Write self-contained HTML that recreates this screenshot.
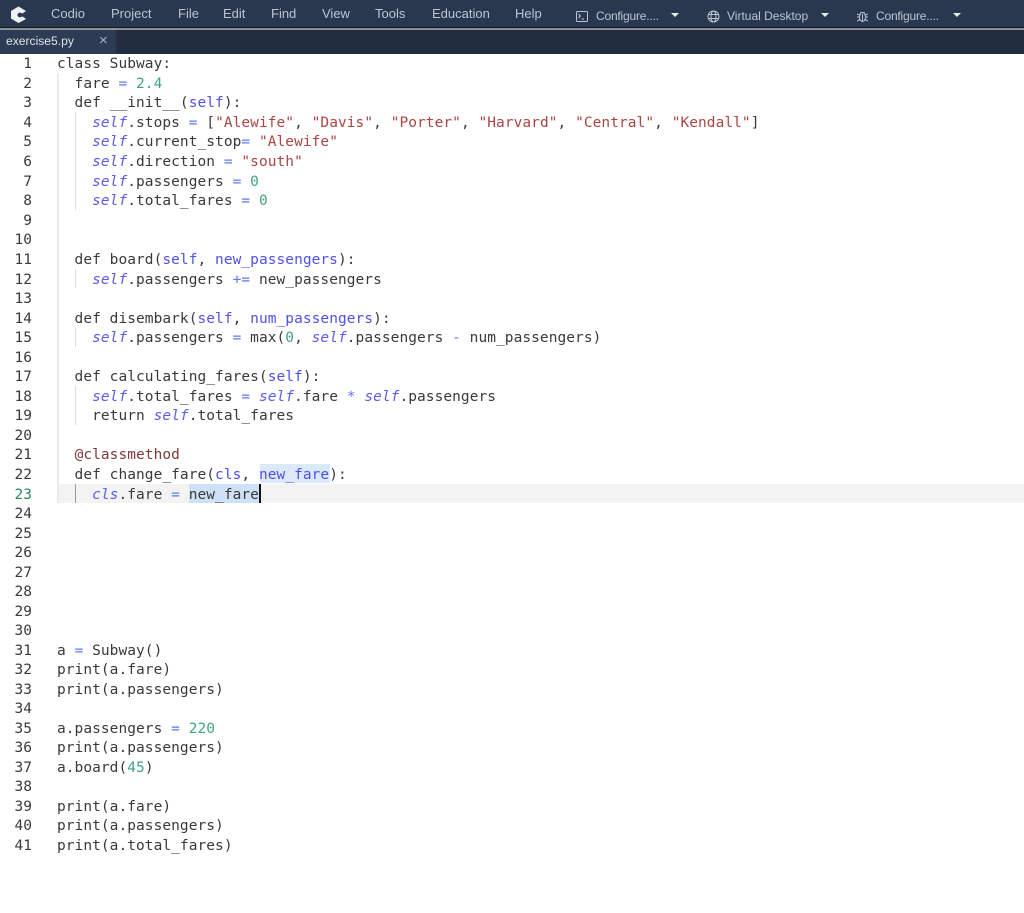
<!DOCTYPE html>
<html><head><meta charset="utf-8">
<style>
html,body{margin:0;padding:0;background:#fff;width:1024px;height:913px;overflow:hidden}
body{position:relative;font-family:"Liberation Sans",sans-serif}
#top{position:absolute;left:0;top:0;width:1024px;height:28px;background:#29384f}
#sep{position:absolute;left:0;top:27px;width:1024px;height:1px;background:#10161f}
#sep2{position:absolute;left:0;top:28px;width:1024px;height:2px;background:#8d929a}
#tabs{position:absolute;left:0;top:30px;width:1024px;height:24px;background:#222d3f}
#tab{position:absolute;left:0;top:30px;width:116px;height:24px;background:#2d3c54}
.m{position:absolute;top:5px;font-size:13px;line-height:17px;color:#bcc5d2;white-space:nowrap}
.c{position:absolute;top:8px;font-size:12px;line-height:17px;color:#bcc5d2;white-space:nowrap}
.cf{letter-spacing:-.2px}
.tri{position:absolute;top:13px;width:0;height:0;border-left:4.500px solid transparent;border-right:4.500px solid transparent;border-top:4px solid #e8ecf0}
svg{position:absolute}
.ln,.l{position:absolute;font-family:"DejaVu Sans Mono","Liberation Mono",monospace;font-size:14.5px;line-height:20px;height:20px;white-space:pre;margin-top:1px}
.ln{left:0;width:32px;text-align:right;color:#3a3a3a}
.l{left:57px;color:#3a3a3a;letter-spacing:.05px}
.s{color:#5c5cf0;font-style:italic}
.p{color:#5050ea}
.o{color:#5f78f0}
.n{color:#3fa387}
.t{color:#ab4444}
.d{color:#7c3a3a}
.g{position:absolute;width:1px;background:#dcdcdc}
</style></head><body>
<div id="top"></div><div id="sep"></div><div id="sep2"></div><div id="tabs"></div><div id="tab"></div>
<svg style="left:10px;top:6px" width="17" height="17" viewBox="0 0 17 17"><path d="M8.500 .5L16 5L12.500 7.500L9.500 6.500L7.500 8V10L9.500 11.500L12.500 10.500L16 13L8.500 17L1 12.500V5Z" fill="#eef1f5"/></svg>
<div class="m" style="left:51px">Codio</div>
<div class="m" style="left:111px">Project</div>
<div class="m" style="left:178px">File</div>
<div class="m" style="left:223px">Edit</div>
<div class="m" style="left:271px">Find</div>
<div class="m" style="left:322px">View</div>
<div class="m" style="left:375px">Tools</div>
<div class="m" style="left:432px">Education</div>
<div class="m" style="left:515px">Help</div>
<svg style="left:576px;top:11px" width="12" height="11" viewBox="0 0 12 11"><rect x=".5" y=".5" width="11" height="10" rx="1" fill="none" stroke="#bcc5d2"/><path d="M2.500 3L4.500 5L2.500 7M5.500 8H8" fill="none" stroke="#bcc5d2"/></svg>
<div class="c cf" style="left:596px">Configure....</div><div class="tri" style="left:671px"></div>
<svg style="left:707px;top:10px" width="13" height="13" viewBox="0 0 13 13" fill="none" stroke="#bcc5d2"><circle cx="6.500" cy="6.500" r="5.500"/><ellipse cx="6.500" cy="6.500" rx="2.500" ry="5.500"/><path d="M1 4.500H12M1 8.500H12"/></svg>
<div class="c" style="left:727px">Virtual Desktop</div><div class="tri" style="left:821px"></div>
<svg style="left:857px;top:10px" width="11" height="13" viewBox="0 0 11 13" fill="none" stroke="#bcc5d2"><ellipse cx="5.500" cy="7" rx="3" ry="4.500"/><path d="M0 4L2.500 5M11 4L8.500 5M0 7H2.500M11 7H8.500M0 11L3 9.500M11 11L8 9.500M3.500 2L4.500 3M7.500 2L6.500 3M5.500 4V11"/></svg>
<div class="c cf" style="left:876px">Configure....</div><div class="tri" style="left:953px"></div>
<div class="m" style="left:6px;top:33px;font-size:12.100px;color:#dfe4ea">exercise5.py</div>
<div class="m" style="left:99px;top:32px;font-size:15px;color:#aab3c0">×</div>

<div style="position:absolute;left:57px;top:484px;width:967px;height:19px;background:#f3f3f3"></div>
<div style="position:absolute;left:260px;top:464px;width:70px;height:19px;background:#dbe9fa"></div>
<div style="position:absolute;left:189px;top:484px;width:71px;height:19px;background:#cfe1f6"></div>
<div style="position:absolute;left:259px;top:484px;width:2px;height:19px;background:#111"></div>
<div class="g" style="left:57px;top:73px;height:430px;width:2px;background:#ececec"></div>
<div class="g" style="left:75px;top:112px;height:98px"></div>
<div class="g" style="left:75px;top:269px;height:19px"></div>
<div class="g" style="left:75px;top:327px;height:20px"></div>
<div class="g" style="left:75px;top:386px;height:39px"></div>
<div class="g" style="left:75px;top:484px;height:19px;background:#999"></div>

<div class="ln" style="top:53px">1</div><div class="l" style="top:53px">class Subway:</div>
<div class="ln" style="top:73px">2</div><div class="l" style="top:73px">  fare <span class="o">=</span> <span class="n">2.4</span></div>
<div class="ln" style="top:92px">3</div><div class="l" style="top:92px">  def __init__(<span class="p">self</span>):</div>
<div class="ln" style="top:112px">4</div><div class="l" style="top:112px">    <span class="s">self</span>.stops <span class="o">=</span> [<span class="t">"Alewife"</span>, <span class="t">"Davis"</span>, <span class="t">"Porter"</span>, <span class="t">"Harvard"</span>, <span class="t">"Central"</span>, <span class="t">"Kendall"</span>]</div>
<div class="ln" style="top:131px">5</div><div class="l" style="top:131px">    <span class="s">self</span>.current_stop<span class="o">=</span> <span class="t">"Alewife"</span></div>
<div class="ln" style="top:151px">6</div><div class="l" style="top:151px">    <span class="s">self</span>.direction <span class="o">=</span> <span class="t">"south"</span></div>
<div class="ln" style="top:171px">7</div><div class="l" style="top:171px">    <span class="s">self</span>.passengers <span class="o">=</span> <span class="n">0</span></div>
<div class="ln" style="top:190px">8</div><div class="l" style="top:190px">    <span class="s">self</span>.total_fares <span class="o">=</span> <span class="n">0</span></div>
<div class="ln" style="top:210px">9</div>
<div class="ln" style="top:229px">10</div>
<div class="ln" style="top:249px">11</div><div class="l" style="top:249px">  def board(<span class="p">self</span>, <span class="p">new_passengers</span>):</div>
<div class="ln" style="top:269px">12</div><div class="l" style="top:269px">    <span class="s">self</span>.passengers <span class="o">+=</span> new_passengers</div>
<div class="ln" style="top:288px">13</div>
<div class="ln" style="top:308px">14</div><div class="l" style="top:308px">  def disembark(<span class="p">self</span>, <span class="p">num_passengers</span>):</div>
<div class="ln" style="top:327px">15</div><div class="l" style="top:327px">    <span class="s">self</span>.passengers <span class="o">=</span> max(<span class="n">0</span>, <span class="s">self</span>.passengers <span class="o">-</span> num_passengers)</div>
<div class="ln" style="top:347px">16</div>
<div class="ln" style="top:366px">17</div><div class="l" style="top:366px">  def calculating_fares(<span class="p">self</span>):</div>
<div class="ln" style="top:386px">18</div><div class="l" style="top:386px">    <span class="s">self</span>.total_fares <span class="o">=</span> <span class="s">self</span>.fare <span class="o">*</span> <span class="s">self</span>.passengers</div>
<div class="ln" style="top:405px">19</div><div class="l" style="top:405px">    return <span class="s">self</span>.total_fares</div>
<div class="ln" style="top:425px">20</div>
<div class="ln" style="top:444px">21</div><div class="l" style="top:444px">  <span class="d">@classmethod</span></div>
<div class="ln" style="top:464px">22</div><div class="l" style="top:464px">  def change_fare(<span class="p">cls</span>, <span class="p">new_fare</span>):</div>
<div class="ln" style="top:484px;color:#2d8a5c">23</div><div class="l" style="top:484px">    <span class="s">cls</span>.fare <span class="o">=</span> new_fare</div>
<div class="ln" style="top:503px">24</div>
<div class="ln" style="top:523px">25</div>
<div class="ln" style="top:542px">26</div>
<div class="ln" style="top:562px">27</div>
<div class="ln" style="top:581px">28</div>
<div class="ln" style="top:601px">29</div>
<div class="ln" style="top:620px">30</div>
<div class="ln" style="top:640px">31</div><div class="l" style="top:640px">a <span class="o">=</span> Subway()</div>
<div class="ln" style="top:659px">32</div><div class="l" style="top:659px">print(a.fare)</div>
<div class="ln" style="top:679px">33</div><div class="l" style="top:679px">print(a.passengers)</div>
<div class="ln" style="top:698px">34</div>
<div class="ln" style="top:718px">35</div><div class="l" style="top:718px">a.passengers <span class="o">=</span> <span class="n">220</span></div>
<div class="ln" style="top:737px">36</div><div class="l" style="top:737px">print(a.passengers)</div>
<div class="ln" style="top:757px">37</div><div class="l" style="top:757px">a.board(<span class="n">45</span>)</div>
<div class="ln" style="top:776px">38</div>
<div class="ln" style="top:796px">39</div><div class="l" style="top:796px">print(a.fare)</div>
<div class="ln" style="top:815px">40</div><div class="l" style="top:815px">print(a.passengers)</div>
<div class="ln" style="top:835px">41</div><div class="l" style="top:835px">print(a.total_fares)</div>
</body></html>
